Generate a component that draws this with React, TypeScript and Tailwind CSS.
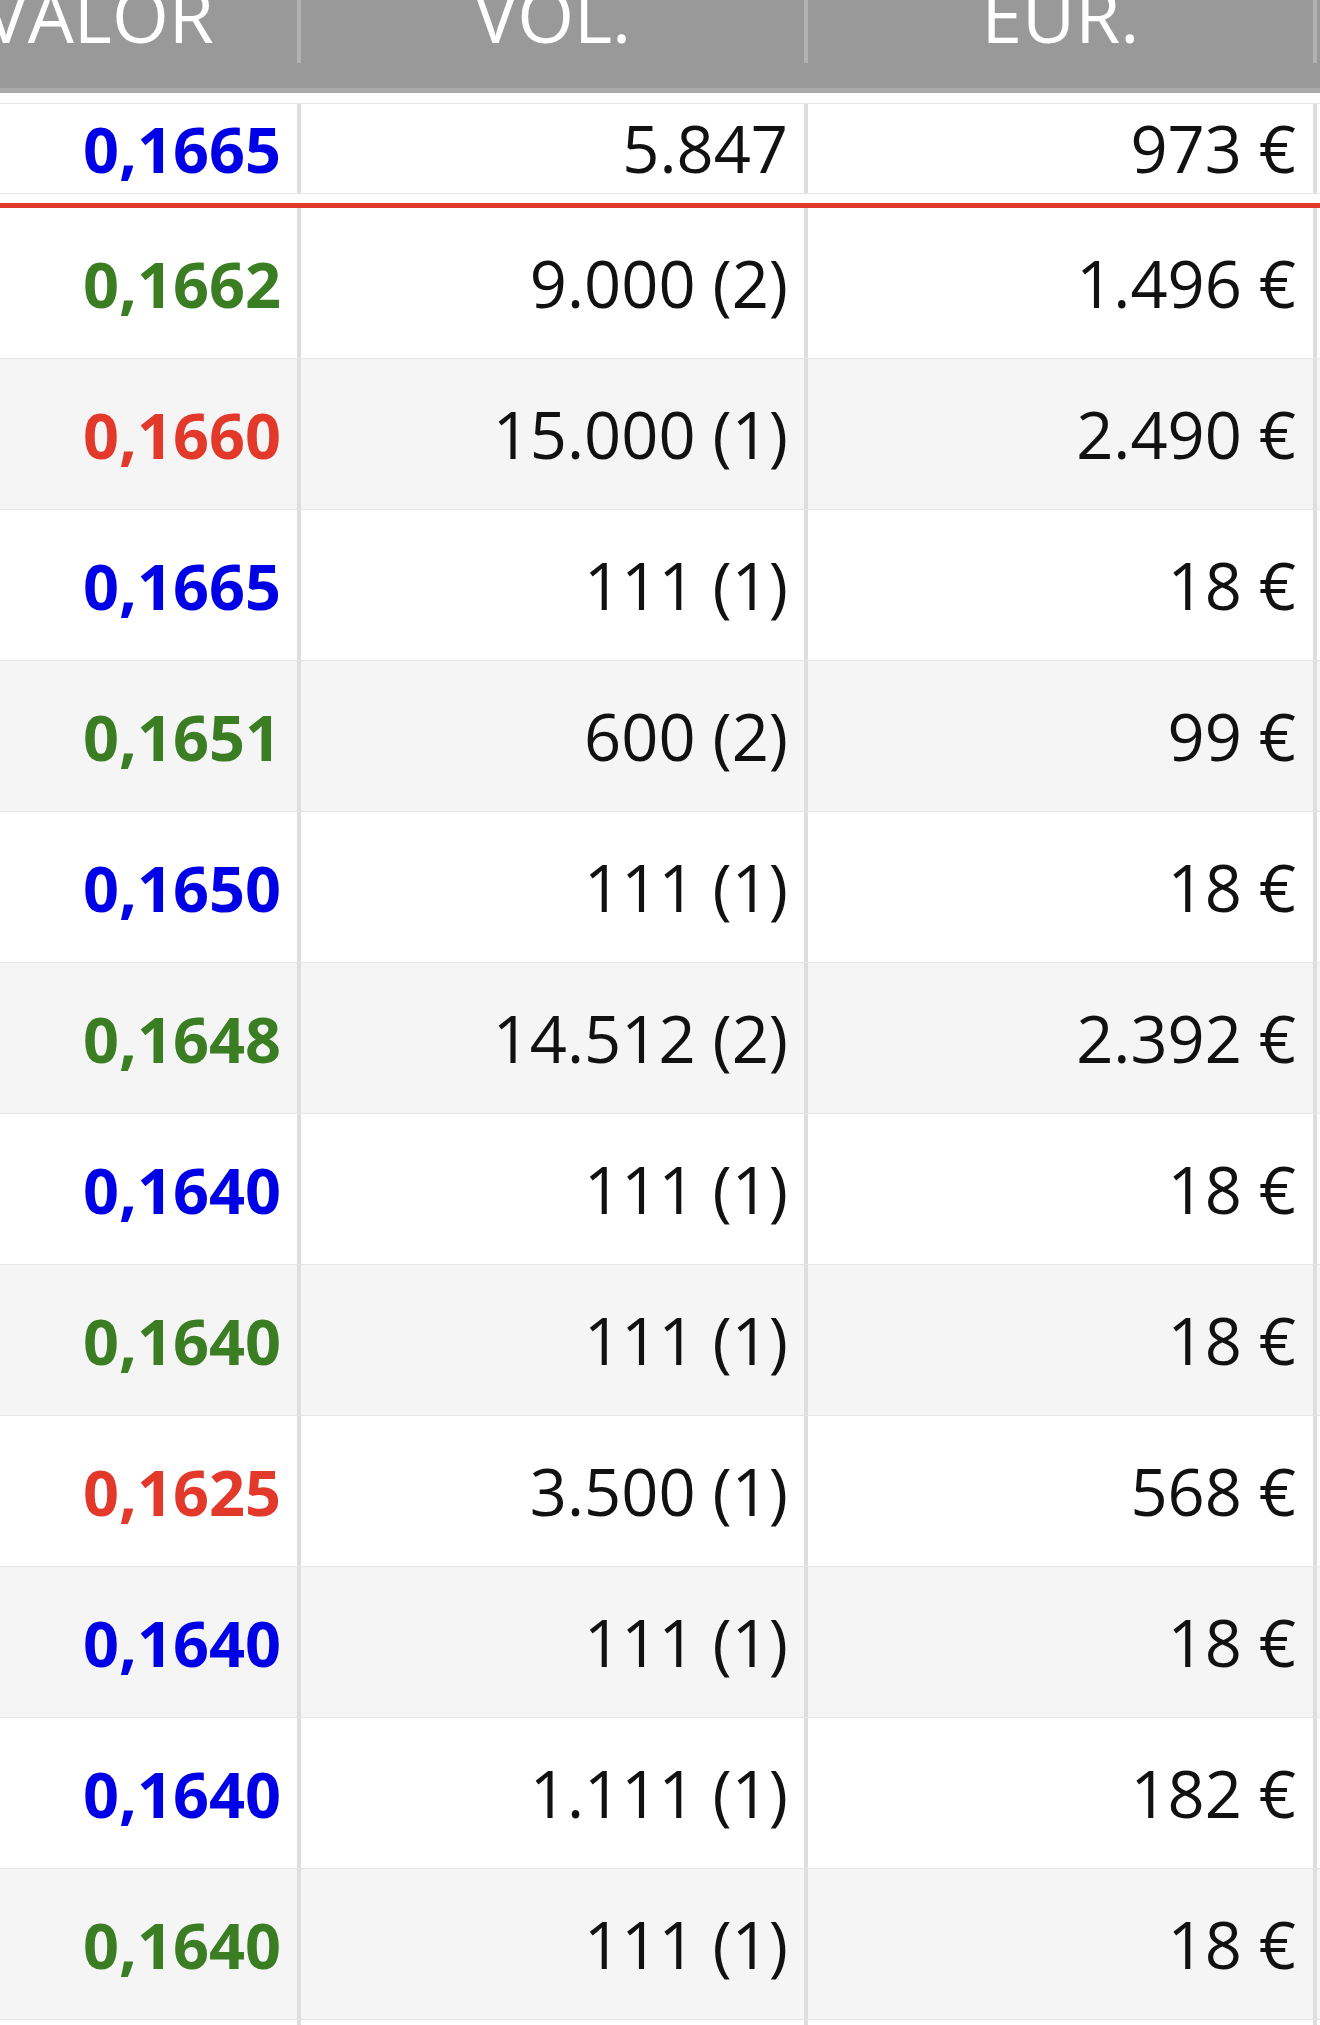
import React from 'react';

type Row = { valor: string; color: 'blue' | 'green' | 'red'; vol: string; eur: string };

const colorClass = {
  blue: 'text-[#0000e6]',
  green: 'text-[#3a7d22]',
  red: 'text-[#e3392b]',
};

const rows: Row[] = [
  { valor: '0,1662', color: 'green', vol: '9.000 (2)', eur: '1.496 €' },
  { valor: '0,1660', color: 'red', vol: '15.000 (1)', eur: '2.490 €' },
  { valor: '0,1665', color: 'blue', vol: '111 (1)', eur: '18 €' },
  { valor: '0,1651', color: 'green', vol: '600 (2)', eur: '99 €' },
  { valor: '0,1650', color: 'blue', vol: '111 (1)', eur: '18 €' },
  { valor: '0,1648', color: 'green', vol: '14.512 (2)', eur: '2.392 €' },
  { valor: '0,1640', color: 'blue', vol: '111 (1)', eur: '18 €' },
  { valor: '0,1640', color: 'green', vol: '111 (1)', eur: '18 €' },
  { valor: '0,1625', color: 'red', vol: '3.500 (1)', eur: '568 €' },
  { valor: '0,1640', color: 'blue', vol: '111 (1)', eur: '18 €' },
  { valor: '0,1640', color: 'blue', vol: '1.111 (1)', eur: '182 €' },
  { valor: '0,1640', color: 'green', vol: '111 (1)', eur: '18 €' },
  { valor: '0,1640', color: 'blue', vol: '111 (1)', eur: '18 €' },
];

// una fila de la tabla de operaciones
const TradeRow = ({ row, shaded, className = '' }: { row: Row; shaded?: boolean; className?: string }) => (
  <div className={`flex -ml-[99px] ${shaded ? 'bg-[#f5f5f5]' : 'bg-white'} ${className}`}>
    <div className="w-[400px] border-r-4 border-[#dedede] flex items-center justify-end pr-[16px]">
      <span className={`text-[63px] font-bold ${colorClass[row.color]}`}>{row.valor}</span>
    </div>
    <div className="w-[507px] border-r-4 border-[#dedede] flex items-center justify-end pr-[16px]">
      <span className="text-[65px] text-[#111]">{row.vol}</span>
    </div>
    <div className="w-[509px] border-r-4 border-[#dedede] flex items-center justify-end pr-[17px]">
      <span className="text-[65px] text-[#111]">{row.eur}</span>
    </div>
  </div>
);

export default function App() {
  return (
    <div className="w-[1320px] h-[2025px] overflow-hidden bg-white font-['Open_Sans',sans-serif] leading-none">
      {/* cabecera */}
      <div className="flex -ml-[99px] h-[88px] bg-[#999999]">
        <div className="w-[396px] flex justify-center">
          <span className="-mt-[22px] text-[73px] text-white leading-none">VALOR</span>
        </div>
        <div className="w-[4px] h-[63px] bg-[#b2b2b2]" />
        <div className="w-[503px] flex justify-center">
          <span className="-mt-[22px] text-[73px] text-white leading-none">VOL.</span>
        </div>
        <div className="w-[4px] h-[63px] bg-[#b2b2b2]" />
        <div className="w-[505px] flex justify-center">
          <span className="-mt-[22px] text-[73px] text-white leading-none">EUR.</span>
        </div>
        <div className="w-[4px] h-[63px] bg-[#b2b2b2]" />
      </div>
      <div className="h-[5px] bg-[#ababab]" />

      {/* último precio */}
      <TradeRow
        row={{ valor: '0,1665', color: 'blue', vol: '5.847', eur: '973 €' }}
        className="mt-[10px] h-[91px] border-y border-[#e6e6e6]"
      />
      <div className="mt-[9px] h-[5px] bg-[#e3392b]" />

      {/* histórico */}
      {rows.map((r, i) => (
        <TradeRow key={i} row={r} shaded={i % 2 === 1} className="h-[151px] border-b border-[#e6e6e6]" />
      ))}
    </div>
  );
}
